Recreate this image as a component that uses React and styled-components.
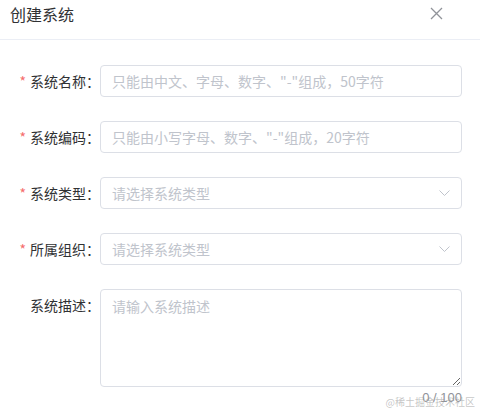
import React from "react"
import styled, { createGlobalStyle } from "styled-components"

const GlobalStyle = createGlobalStyle`
  html, body {
    margin: 0;
    padding: 0;
    background: #fff;
  }
  body {
    font-family: "Noto Sans CJK SC", "Noto Sans", sans-serif;
    color: #606266;
  }
`

const fields = [
  { label: "系统名称：", required: true, type: "input", placeholder: '只能由中文、字母、数字、"-"组成，50字符' },
  { label: "系统编码：", required: true, type: "input", placeholder: '只能由小写字母、数字、"-"组成，20字符' },
  { label: "系统类型：", required: true, type: "select", placeholder: "请选择系统类型" },
  { label: "所属组织：", required: true, type: "select", placeholder: "请选择系统类型" },
]

const App = () => (
  <Dialog>
    <GlobalStyle />
    <Header>
      <Title>创建系统</Title>
      <CloseButton aria-label="close">
        <svg width="13" height="13" viewBox="0 0 13 13">
          <path d="M1 1 L12 12 M12 1 L1 12" stroke="#909399" strokeWidth="1.3" fill="none" />
        </svg>
      </CloseButton>
    </Header>
    <Form>
      {fields.map((f) => (
        <Row key={f.label}>
          <Label>
            {f.required && <Star>*</Star>}
            {f.label}
          </Label>
          {f.type === "input" ? (
            <TextInput placeholder={f.placeholder} />
          ) : (
            <Select>
              <span>{f.placeholder}</span>
              <svg width="11" height="6" viewBox="0 0 11 6">
                <path d="M0.5 0.5 L5.5 5.5 L10.5 0.5" stroke="#c0c4cc" strokeWidth="1" fill="none" />
              </svg>
            </Select>
          )}
        </Row>
      ))}
      <Row>
        <Label>系统描述：</Label>
        <AreaWrap>
          <TextArea placeholder="请输入系统描述" />
          <Count>0 / 100</Count>
        </AreaWrap>
      </Row>
    </Form>
    <Watermark>@稀土掘金技术社区</Watermark>
  </Dialog>
)

export default App

const Dialog = styled.div`
  position: relative;
  width: 480px;
  height: 411px;
  overflow: hidden;
  background: #fff;
`

const Header = styled.div`
  height: 40px;
  box-sizing: border-box;
  border-bottom: 1px solid #ebeef5;
  display: flex;
  align-items: flex-start;
  justify-content: space-between;
  padding: 3px 37px 0 10px;
`

const Title = styled.div`
  font-size: 16px;
  line-height: 22px;
  color: #303133;
`

const CloseButton = styled.div`
  margin-top: 4px;
  width: 13px;
  height: 13px;
  display: flex;
`

const Form = styled.div`
  display: flex;
  flex-direction: column;
  gap: 24px;
  padding: 25px 18px 0 0;
`

const Row = styled.div`
  display: flex;
  align-items: flex-start;
`

const Label = styled.label`
  width: 100px;
  flex-shrink: 0;
  text-align: right;
  font-size: 14px;
  line-height: 32px;
  color: #303133;
`

const Star = styled.span`
  color: #f56c6c;
  margin-right: 4px;
`

const fieldBox = `
  box-sizing: border-box;
  flex: 1;
  height: 32px;
  border: 1px solid #dcdfe6;
  border-radius: 4px;
  font-size: 14px;
  font-family: "Noto Sans CJK SC", "Noto Sans", sans-serif;
  padding: 0 11px;
  color: #606266;
  background: #fff;
`

const TextInput = styled.input`
  ${fieldBox}
  outline: none;
  min-width: 0;
  &::placeholder {
    color: #c0c4cc;
  }
`

const Select = styled.div`
  ${fieldBox}
  display: flex;
  align-items: center;
  justify-content: space-between;
  padding-right: 11px;
  color: #c0c4cc;
`

const AreaWrap = styled.div`
  flex: 1;
  display: flex;
  flex-direction: column;
`

const TextArea = styled.textarea`
  box-sizing: border-box;
  width: 100%;
  height: 98px;
  border: 1px solid #dcdfe6;
  border-radius: 4px;
  padding: 5px 11px;
  font-size: 14px;
  line-height: 22px;
  font-family: "Noto Sans CJK SC", "Noto Sans", sans-serif;
  color: #606266;
  resize: vertical;
  outline: none;
  &::placeholder {
    color: #c0c4cc;
  }
`

const Count = styled.div`
  align-self: flex-end;
  font-size: 13px;
  line-height: 16px;
  margin-top: 3px;
  color: #909399;
  font-family: "Liberation Sans", sans-serif;
`

const Watermark = styled.div`
  position: absolute;
  right: 5px;
  bottom: 2px;
  font-size: 10px;
  color: rgba(150, 150, 150, 0.55);
  font-family: "Noto Sans CJK SC", sans-serif;
`
